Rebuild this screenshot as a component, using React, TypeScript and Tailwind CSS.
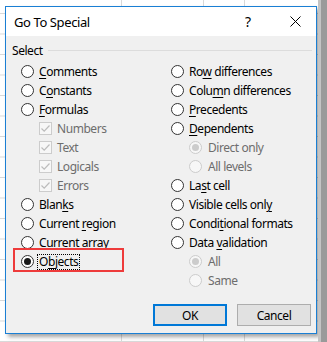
import React from "react";

const FONT = { fontFamily: '"Noto Sans", "Segoe UI", sans-serif' };

function M({ children }: { children: React.ReactNode }) {
  return <span className="underline underline-offset-[2px] decoration-[1px]">{children}</span>;
}

function Radio({ checked = false, disabled = false }: { checked?: boolean; disabled?: boolean }) {
  return (
    <span
      className={
        "flex h-[13px] w-[13px] shrink-0 items-center justify-center rounded-full border " +
        (disabled ? "border-[#cccccc] bg-[#f7f7f7]" : "border-[#333333] bg-white")
      }
    >
      {checked && (
        <span className={"h-[7px] w-[7px] rounded-full " + (disabled ? "bg-[#cccccc]" : "bg-[#1a1a1a]")} />
      )}
    </span>
  );
}

function Check() {
  return (
    <span className="flex h-[13px] w-[13px] shrink-0 items-center justify-center border border-[#cccccc] bg-[#f7f7f7]">
      <svg width="11" height="11" viewBox="0 0 11 11">
        <path d="M1.5 5.5 L4.2 8.2 L9.5 2.5" fill="none" stroke="#bcbcbc" strokeWidth="1.2" />
      </svg>
    </span>
  );
}

function Row({ children }: { children: React.ReactNode }) {
  return <div className="flex h-[19px] items-center">{children}</div>;
}

const TXT = "text-[12px] leading-[15px] tracking-[-0.45px]";

function RadioRow({ label, checked }: { label: React.ReactNode; checked?: boolean }) {
  return (
    <Row>
      <Radio checked={checked} />
      <span className={"ml-[5px] text-black " + TXT}>{label}</span>
    </Row>
  );
}

function CheckRow({ label }: { label: string }) {
  return (
    <Row>
      <span className="ml-[18px] flex items-center">
        <Check />
        <span className={"ml-[5px] text-[#6d6d6d] " + TXT}>{label}</span>
      </span>
    </Row>
  );
}

function SubRadioRow({ label, checked }: { label: string; checked?: boolean }) {
  return (
    <Row>
      <span className="ml-[18px] flex items-center">
        <Radio checked={checked} disabled />
        <span className={"ml-[6px] text-[#6d6d6d] " + TXT}>{label}</span>
      </span>
    </Row>
  );
}

export default function App() {
  return (
    <div
      className="flex h-[342px] w-[327px] overflow-hidden bg-white bg-[linear-gradient(to_right,#d9d9d9_1px,transparent_1px),linear-gradient(to_bottom,#d9d9d9_1px,transparent_1px)] bg-[size:41px_20.5px] bg-[position:39px_13px]"
      style={FONT}
    >
      <div className="flex-1">
        <div className="ml-[5px] mt-[6px] flex h-[328px] w-[312px] flex-col border border-[#1a7fd4] shadow-[3px_3px_4px_rgba(0,0,0,0.35)]">
          {/* Title bar */}
          <div className="flex h-[29px] shrink-0 items-center bg-white">
            <span className="flex-1 pl-[8px] text-[13px] leading-[18px] tracking-[-0.4px] text-black">Go To Special</span>
            <span className="mr-[3px] w-[46px] text-center text-[14px] leading-[18px] text-black">?</span>
            <span className="flex w-[42px] items-center justify-center">
              <svg width="11" height="11" viewBox="0 0 11 11">
                <path d="M0.5 0.5 L10.5 10.5 M10.5 0.5 L0.5 10.5" stroke="#000" strokeWidth="1" />
              </svg>
            </span>
          </div>
          {/* Body */}
          <div className="flex flex-1 flex-col bg-[#f0f0f0]">
            <div className="flex items-center pl-[6px] pr-[4px] pt-[7px]">
              <span className={"text-black " + TXT}>Select</span>
              <span className="ml-[5px] h-px flex-1 bg-[#dcdcdc]" />
            </div>
            <div className="mt-[4px] flex pl-[15px]">
              <div className="flex w-[150px] flex-col">
                <RadioRow label={<><M>C</M>omments</>} />
                <RadioRow label={<>C<M>o</M>nstants</>} />
                <RadioRow label={<><M>F</M>ormulas</>} />
                <CheckRow label="Numbers" />
                <CheckRow label="Text" />
                <CheckRow label="Logicals" />
                <CheckRow label="Errors" />
                <RadioRow label={<>Blan<M>k</M>s</>} />
                <RadioRow label={<>Current <M>r</M>egion</>} />
                <RadioRow label={<>Current <M>a</M>rray</>} />
                <div className="relative">
                  <span className="pointer-events-none absolute left-[-8px] top-[-4px] h-[24px] w-[111px] border-2 border-[#ee3b3b]" />
                  <Row>
                    <Radio checked />
                    <span className={"ml-[3px] border border-dotted border-black px-[1px] text-black text-[12px] leading-[14px] tracking-[-0.45px]"}>
                      O<M>b</M>jects
                    </span>
                  </Row>
                </div>
              </div>
              <div className="flex flex-col">
                <RadioRow label={<>Ro<M>w</M> differences</>} />
                <RadioRow label={<>Colu<M>m</M>n differences</>} />
                <RadioRow label={<><M>P</M>recedents</>} />
                <RadioRow label={<><M>D</M>ependents</>} />
                <SubRadioRow label="Direct only" checked />
                <SubRadioRow label="All levels" />
                <RadioRow label={<>La<M>s</M>t cell</>} />
                <RadioRow label={<>Visible cells onl<M>y</M></>} />
                <RadioRow label={<>Condi<M>t</M>ional formats</>} />
                <RadioRow label={<>Data <M>v</M>alidation</>} />
                <SubRadioRow label="All" checked />
                <SubRadioRow label="Same" />
              </div>
            </div>
            <div className="mt-[14px] flex justify-end gap-[10px] pr-[5px]">
              <button className={"flex h-[22px] w-[74px] items-center justify-center border-2 border-[#0078d7] bg-[#e1e1e1] text-black " + TXT}>
                OK
              </button>
              <button className={"flex h-[22px] w-[74px] items-center justify-center border border-[#adadad] bg-[#e1e1e1] text-black " + TXT}>
                Cancel
              </button>
            </div>
          </div>
        </div>
      </div>
      <div className="flex w-[9px] shrink-0">
        <div className="w-[3px] bg-[#c4c4c4]" />
        <div className="flex-1 bg-[#9a9a9a]" />
      </div>
    </div>
  );
}
